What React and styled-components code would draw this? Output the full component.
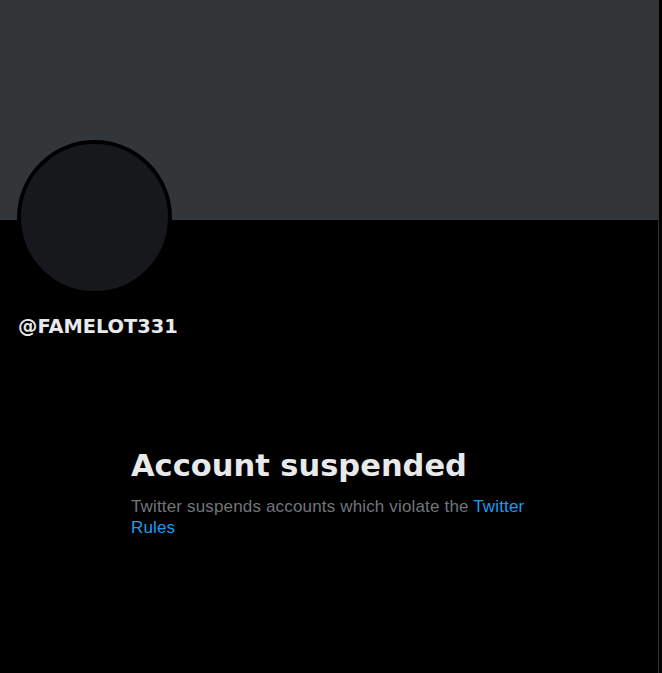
import React from "react"
import styled, { createGlobalStyle } from "styled-components"

const GlobalStyle = createGlobalStyle`
  html, body {
    margin: 0;
    padding: 0;
    background: #000;
  }
  body {
    font-family: "Liberation Sans", Arial, sans-serif;
    color: #e7e9ea;
  }
`

const App = () => {
  return (
    <>
      <GlobalStyle />
      <Column>
        <Banner />
        <ProfileHeader>
          <Avatar />
          <Handle>@FAMELOT331</Handle>
        </ProfileHeader>
        <EmptyState>
          <Heading>Account suspended</Heading>
          <Message>
            Twitter suspends accounts which violate the <a href="#">Twitter Rules</a>
          </Message>
        </EmptyState>
      </Column>
    </>
  )
}

export default App

const Column = styled.main`
  width: 658px;
  min-height: 673px;
  border-right: 1px solid #2f3336;
  background: #000;
  display: flex;
  flex-direction: column;
`

const Banner = styled.div`
  height: 220px;
  background: #333639;
`

const ProfileHeader = styled.section`
  padding: 0 16px 0 17px;
  display: flex;
  flex-direction: column;
  align-items: flex-start;
`

const Avatar = styled.div`
  width: 147px;
  height: 147px;
  margin-top: -80px;
  border: 4px solid #000;
  border-radius: 50%;
  background: #16181c;
`

const Handle = styled.h2`
  margin: 20px 0 0 1px;
  font-family: "DejaVu Sans", "Liberation Sans", sans-serif;
  font-size: 19.4px;
  line-height: 24px;
  font-weight: 700;
  color: #e7e9ea;
`

const EmptyState = styled.section`
  width: 400px;
  margin: 109px 0 0 130px;
  display: flex;
  flex-direction: column;
`

const Heading = styled.h1`
  margin: 0 0 12px 1px;
  font-family: "DejaVu Sans", "Liberation Sans", sans-serif;
  font-size: 30.5px;
  line-height: 36px;
  font-weight: 700;
  color: #e7e9ea;
`

const Message = styled.p`
  margin: 0 0 0 1px;
  font-size: 17px;
  line-height: 21px;
  letter-spacing: 0.16px;
  color: #71767b;

  a {
    color: #1d9bf0;
    text-decoration: none;
  }
`
